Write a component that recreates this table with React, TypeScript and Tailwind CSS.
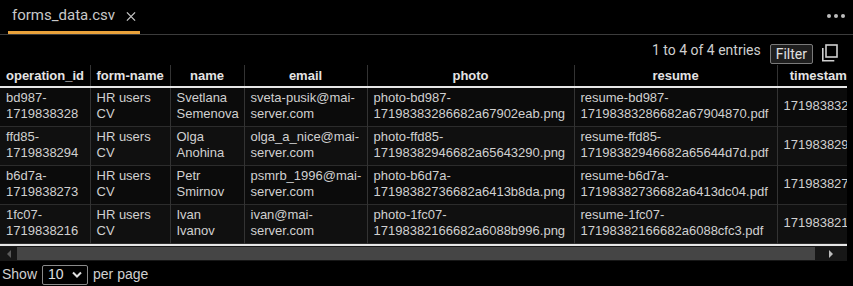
import React from 'react';

interface Row {
  operationId: string;
  formName: string;
  name: string;
  email: string;
  photo: string;
  resume: string;
  timestamp: string;
}

const rows: Row[] = [
  {
    operationId: 'bd987-1719838328',
    formName: 'HR users CV',
    name: 'Svetlana Semenova',
    email: 'sveta-pusik@mai-server.com',
    photo: 'photo-bd987-17198383286682a67902eab.png',
    resume: 'resume-bd987-17198383286682a67904870.pdf',
    timestamp: '1719838328',
  },
  {
    operationId: 'ffd85-1719838294',
    formName: 'HR users CV',
    name: 'Olga Anohina',
    email: 'olga_a_nice@mai-server.com',
    photo: 'photo-ffd85-17198382946682a65643290.png',
    resume: 'resume-ffd85-17198382946682a65644d7d.pdf',
    timestamp: '1719838294',
  },
  {
    operationId: 'b6d7a-1719838273',
    formName: 'HR users CV',
    name: 'Petr Smirnov',
    email: 'psmrb_1996@mai-server.com',
    photo: 'photo-b6d7a-17198382736682a6413b8da.png',
    resume: 'resume-b6d7a-17198382736682a6413dc04.pdf',
    timestamp: '1719838273',
  },
  {
    operationId: '1fc07-1719838216',
    formName: 'HR users CV',
    name: 'Ivan Ivanov',
    email: 'ivan@mai-server.com',
    photo: 'photo-1fc07-17198382166682a6088b996.png',
    resume: 'resume-1fc07-17198382166682a6088cfc3.pdf',
    timestamp: '1719838216',
  },
];

const columns = [
  { key: 'operationId', label: 'operation_id', width: 'w-[90px]' },
  { key: 'formName', label: 'form-name', width: 'w-[80px]' },
  { key: 'name', label: 'name', width: 'w-[74px]' },
  { key: 'email', label: 'email', width: 'w-[123px]' },
  { key: 'photo', label: 'photo', width: 'w-[207px]' },
  { key: 'resume', label: 'resume', width: 'w-[203px]' },
  { key: 'timestamp', label: 'timestamp', width: 'w-[90px]' },
] as const;

// the narrow columns wrap after the last dash / space
const splitAt = (value: string, at: number) => (
  <>
    {value.slice(0, at)}
    <br />
    {value.slice(at)}
  </>
);

const renderCell = (r: Row, key: keyof Row) => {
  const v = r[key];
  if (key === 'timestamp') return v;
  if (key === 'formName' || key === 'name') return splitAt(v, v.lastIndexOf(' ') + 1);
  if (key === 'email') return splitAt(v, v.indexOf('@') + 5);
  return splitAt(v, v.lastIndexOf('-') + 1);
};

const CopyIcon: React.FC = () => (
  <svg width="17" height="18" viewBox="0 0 17 18" fill="none" stroke="#d0d0d0" strokeWidth="1.6">
    <rect x="5" y="1" width="11" height="12" />
    <path d="M1.8 4v12.7h11.5" />
  </svg>
);

const App: React.FC = () => {
  return (
    <div className="w-[853px] h-[286px] bg-black overflow-hidden text-[#d2d2d2]">
      {/* tab bar */}
      <div className="h-[35px] flex items-end justify-between border-b border-[#3c3c3c]">
        <div className="ml-2 w-[132px] h-[34px] px-1 flex items-center border-b-[3px] border-[#e9a23b] font-['Roboto',sans-serif] text-[15px] text-[#c8c8c8]">
          <span>forms_data.csv</span>
          <svg className="ml-[11px] mt-[1px]" width="11" height="11" viewBox="0 0 11 11" stroke="#c8c8c8" strokeWidth="1.4">
            <path d="M1 1l9 9M10 1l-9 9" />
          </svg>
        </div>
        <div className="mr-[8px] mb-[16px] flex gap-[3px]">
          <span className="w-[4px] h-[4px] rounded-full bg-[#bdbdbd]" />
          <span className="w-[4px] h-[4px] rounded-full bg-[#bdbdbd]" />
          <span className="w-[4px] h-[4px] rounded-full bg-[#bdbdbd]" />
        </div>
      </div>

      {/* toolbar */}
      <div className="h-[30px] flex items-end justify-end pr-[15px] pb-[1px] font-['Roboto',sans-serif] text-[14px] text-[#cfcfcf]">
        <span className="mb-[3px]">1 to 4 of 4 entries</span>
        <button className="ml-[9px] h-[20px] px-[5px] border border-[#7a7a7a] rounded-[2px] bg-[#1e1e1e] text-[14px] leading-[18px] text-[#e0e0e0]">
          Filter
        </button>
        <span className="ml-[8px] mb-[2px]">
          <CopyIcon />
        </span>
      </div>

      {/* table */}
      <div className="w-[847px] overflow-hidden">
        <table className="table-fixed border-collapse font-['Liberation_Sans',Arial,sans-serif] text-[13px] leading-4 w-[867px]">
          <thead>
            <tr className="h-[22px] border-b-2 border-[#e6e6e6]">
              {columns.map((c) => (
                <th
                  key={c.key}
                  className={`${c.width} border-l border-[#333] first:border-l-0 font-bold text-center text-[#e4e4e4] px-[6px] whitespace-nowrap overflow-hidden`}
                >
                  {c.label}
                </th>
              ))}
            </tr>
          </thead>
          <tbody>
            {rows.map((r, idx) => (
              <tr key={r.operationId} className={`h-[38px] border-b border-[#2c2c2c] ${idx % 2 === 0 ? 'bg-[#0b0b0b]' : 'bg-[#101010]'}`}>
                {columns.map((c) => (
                  <td
                    key={c.key}
                    className="border-l border-[#333] first:border-l-0 px-[6px] pt-[2px] pb-[4px] align-middle text-[#d0d0d0] whitespace-nowrap overflow-hidden"
                  >
                    {renderCell(r, c.key)}
                  </td>
                ))}
              </tr>
            ))}
          </tbody>
        </table>
        <div className="h-[2px] bg-[#e6e6e6]" />
      </div>

      {/* scrollbar */}
      <div className="w-[847px] h-[15px] bg-[#171717] flex items-center">
        <div className="w-[17px] flex justify-center">
          <span className="w-0 h-0 border-y-[4px] border-y-transparent border-r-[4px] border-r-[#5a5a5a]" />
        </div>
        <div className="w-[798px] h-[13px] bg-[#454545]" />
        <div className="flex-1 flex justify-center">
          <span className="w-0 h-0 border-y-[4px] border-y-transparent border-l-[4px] border-l-[#bcbcbc]" />
        </div>
      </div>

      {/* footer */}
      <div className="mt-[3px] pl-[2px] flex items-center font-['Liberation_Sans',Arial,sans-serif] text-[14px] text-[#d0d0d0]">
        <span>Show</span>
        <div className="ml-[5px] w-[46px] h-[20px] border border-[#8a8a8a] rounded-[2px] flex items-center justify-between px-[5px] bg-black">
          <span className="text-[#e0e0e0]">10</span>
          <svg width="10" height="7" viewBox="0 0 10 7" fill="none" stroke="#e0e0e0" strokeWidth="2">
            <path d="M1 1.5l4 4 4-4" />
          </svg>
        </div>
        <span className="ml-[5px]">per page</span>
      </div>
    </div>
  );
};

export default App;
